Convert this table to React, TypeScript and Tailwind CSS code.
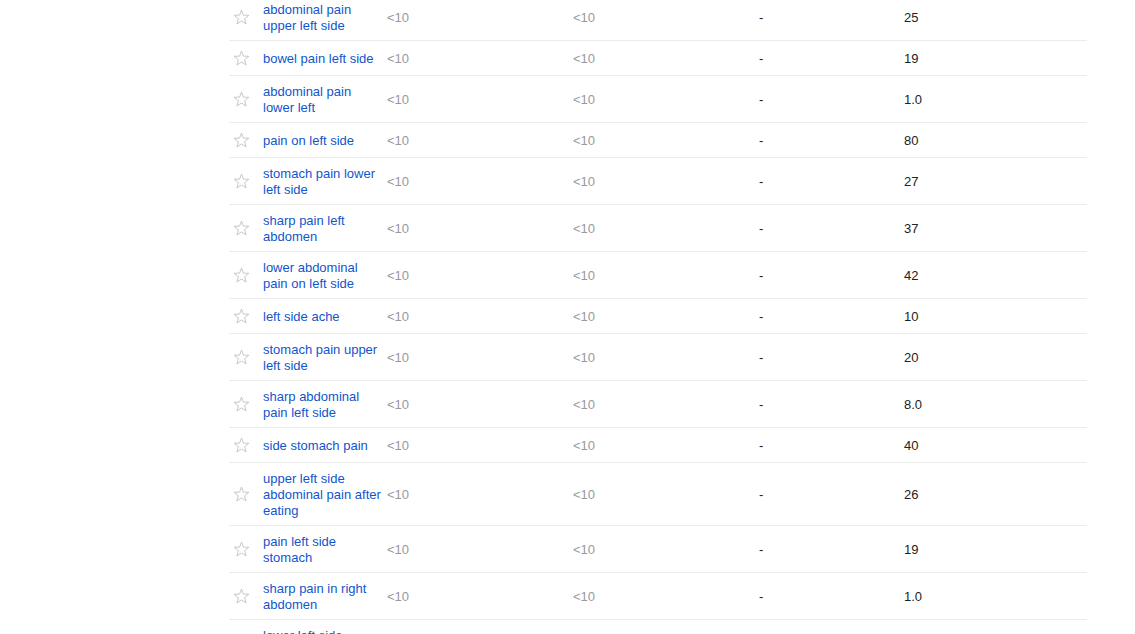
import React from "react";

const rows: [string, string][] = [
  ["abdominal pain upper left side", "25"],
  ["bowel pain left side", "19"],
  ["abdominal pain lower left", "1.0"],
  ["pain on left side", "80"],
  ["stomach pain lower left side", "27"],
  ["sharp pain left abdomen", "37"],
  ["lower abdominal pain on left side", "42"],
  ["left side ache", "10"],
  ["stomach pain upper left side", "20"],
  ["sharp abdominal pain left side", "8.0"],
  ["side stomach pain", "40"],
  ["upper left side abdominal pain after eating", "26"],
  ["pain left side stomach", "19"],
  ["sharp pain in right abdomen", "1.0"],
  ["lower left side abdominal pain", "12"],
];

function Star() {
  return (
    <svg width="17" height="16" viewBox="0 0 17 16" fill="none">
      <path
        d="M8.5 1 L10.4 6.1 L15.9 6.3 L11.6 9.7 L13.1 15 L8.5 11.9 L3.9 15 L5.4 9.7 L1.1 6.3 L6.6 6.1 Z"
        stroke="#c8c8c8"
        strokeWidth="1"
        strokeLinejoin="round"
      />
    </svg>
  );
}

export default function App() {
  return (
    <div
      className="min-h-screen bg-white overflow-hidden"
      style={{ fontFamily: '"Liberation Sans", Arial, sans-serif' }}
    >
      <div className="ml-[229px] w-[858px] -mt-[6px] text-[13px] leading-[16px]">
        {rows.map(([kw, val], i) => (
          <div
            key={i}
            className="flex items-center border-b border-[#ebebeb] pt-[8px] pb-[6px]"
          >
            <div className="w-[34px] h-[20px] pl-[4px] pb-[2px] flex items-center">
              <Star />
            </div>
            <div className="w-[124px] pr-[3px] text-[#1155cc]">{kw}</div>
            <div className="w-[186px] text-[#999999]">&lt;10</div>
            <div className="w-[186px] text-[#999999]">&lt;10</div>
            <div className="w-[145px] text-[#222222]">-</div>
            <div className="flex-1 text-[#222222]">{val}</div>
          </div>
        ))}
      </div>
    </div>
  );
}
